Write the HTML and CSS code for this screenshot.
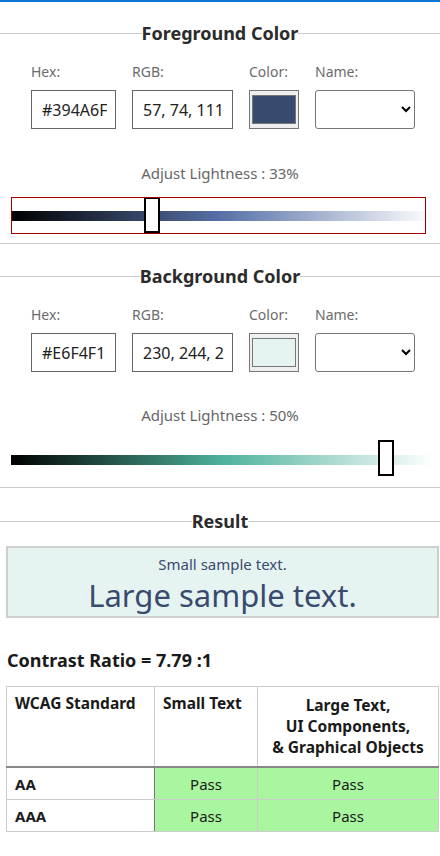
FILE: index.html
```html
<!DOCTYPE html>
<html lang="en">
<head>
<meta charset="utf-8">
<title>Color Contrast Checker</title>
<link rel="stylesheet" href="styles.css">
</head>
<body>
<div class="topbar"></div>

<section class="panel panel-fg">
  <h2 class="legend">Foreground Color</h2>
  <div class="fields">
    <label class="field field-hex"><span class="lbl">Hex:</span><input class="txt" type="text" value="#394A6F"></label>
    <label class="field field-rgb"><span class="lbl">RGB:</span><input class="txt" type="text" value="57, 74, 111"></label>
    <div class="field field-color"><span class="lbl">Color:</span><div class="swatch-box"><div class="swatch swatch-fg"></div></div></div>
    <label class="field field-name"><span class="lbl">Name:</span><select class="sel"><option></option></select></label>
  </div>
  <p class="adjust">Adjust Lightness : 33%</p>
  <div class="slider">
    <div class="track track-fg"></div>
    <div class="thumb" style="left:133px"></div>
    <div class="ring"></div>
  </div>
</section>

<section class="panel panel-bg">
  <h2 class="legend">Background Color</h2>
  <div class="fields">
    <label class="field field-hex"><span class="lbl">Hex:</span><input class="txt" type="text" value="#E6F4F1"></label>
    <label class="field field-rgb"><span class="lbl">RGB:</span><input class="txt" type="text" value="230, 244, 241"></label>
    <div class="field field-color"><span class="lbl">Color:</span><div class="swatch-box"><div class="swatch swatch-bg"></div></div></div>
    <label class="field field-name"><span class="lbl">Name:</span><select class="sel"><option></option></select></label>
  </div>
  <p class="adjust adjust-bg">Adjust Lightness : 50%</p>
  <div class="slider slider-bg">
    <div class="track track-bg"></div>
    <div class="thumb" style="left:367px"></div>
  </div>
</section>

<section class="result">
  <h2 class="legend">Result</h2>
  <div class="sample">
    <p class="sample-small">Small sample text.</p>
    <p class="sample-large">Large sample text.</p>
  </div>
  <h3 class="ratio">Contrast Ratio = 7.79 :1</h3>
  <table class="wcag">
    <thead>
      <tr>
        <th class="c1">WCAG Standard</th>
        <th class="c2">Small Text</th>
        <th class="c3">Large Text,<br>UI Components,<br>&amp; Graphical Objects</th>
      </tr>
    </thead>
    <tbody>
      <tr><th class="lvl">AA</th><td class="pass">Pass</td><td class="pass">Pass</td></tr>
      <tr><th class="lvl">AAA</th><td class="pass">Pass</td><td class="pass">Pass</td></tr>
    </tbody>
  </table>
</section>
</body>
</html>
```

FILE: styles.css
```css
* { box-sizing: border-box; }
html, body { margin: 0; padding: 0; background: #fff; }
body {
  font-family: "Noto Sans", "Open Sans", "Liberation Sans", sans-serif;
  color: #2b2b2b;
  width: 440px;
}
.topbar { height: 2px; background: #0a78d0; }

.panel { border-bottom: 1px solid #cccccc; }
.panel-fg { margin-top: 19px; padding-bottom: 10px; }
.panel-bg { margin-top: 20px; padding-bottom: 11px; }

.legend {
  display: flex;
  align-items: center;
  margin: 0;
  font-size: 18px;
  line-height: 24px;
  font-weight: 700;
  color: #2b2b2b;
  white-space: nowrap;
}
.legend::before, .legend::after {
  content: "";
  flex: 1;
  border-top: 1px solid #cccccc;
}

.fields {
  display: flex;
  gap: 16px;
  padding-left: 31px;
  margin-top: 17px;
}
.field { display: flex; flex-direction: column; }
.lbl {
  font-size: 14px;
  line-height: 20px;
  color: #6b6b6b;
  margin-bottom: 8px;
}
.field-hex { width: 85px; }
.field-rgb { width: 101px; }
.field-color { width: 50px; }
.field-name { width: 100px; }

.txt {
  width: 100%;
  height: 39px;
  margin: 0;
  border: 1px solid #666;
  border-radius: 0;
  padding: 0 8px 0 10px;
  font-family: inherit;
  font-size: 16px;
  color: #222;
  background: #fff;
}
.swatch-box {
  width: 50px;
  height: 39px;
  border: 1px solid #767676;
  background: #efefef;
  padding: 4px 2px;
}
.swatch { height: 100%; border: 1px solid #777; }
.swatch-fg { background: #394a6f; }
.swatch-bg { background: #e6f4f1; }
.sel {
  width: 100%;
  height: 39px;
  margin: 0;
  border: 1px solid #767676;
  border-radius: 3px;
  background: #fff;
  font-family: inherit;
  font-size: 16px;
}

.adjust {
  margin: 34px 0 0;
  text-align: center;
  font-size: 15px;
  line-height: 20px;
  color: #666;
}
.adjust-bg { margin-top: 33px; }

.slider {
  position: relative;
  margin: 14px 0 0 11px;
  width: 422px;
  height: 36px;
  padding-top: 14px;
}
.slider-bg { margin-top: 15px; padding-top: 15px; }
.track { height: 10px; }
.track-fg {
  background: linear-gradient(to right, hsl(221, 32%, 0%), hsl(221, 32%, 50%), hsl(221, 32%, 100%));
}
.track-bg {
  background: linear-gradient(to right, hsl(167, 39%, 0%), hsl(167, 39%, 50%), hsl(167, 39%, 100%));
}
.thumb {
  position: absolute;
  top: 0;
  width: 16px;
  height: 36px;
  background: #fff;
  border: 2px solid #000;
}
.ring {
  position: absolute;
  top: 0;
  left: 0;
  width: 415px;
  height: 37px;
  border: 1px solid #a30000;
}

.result { margin-top: 21px; }
.sample {
  margin: 13px 1px 0 6px;
  border: 2px solid #cfcfcf;
  background: #e6f4f1;
  color: #394a6f;
  text-align: center;
  padding-top: 6px;
}
.sample p { margin: 0; }
.sample-small { font-size: 15px; line-height: 20px; }
.sample-large { font-size: 31px; line-height: 42px; }

.ratio {
  margin: 30px 0 0 7px;
  font-size: 18px;
  line-height: 24px;
  font-weight: 700;
  color: #1a1a1a;
}

.wcag {
  margin: 14px 0 0 6px;
  width: 433px;
  border-collapse: collapse;
  font-size: 15px;
  line-height: 20px;
  color: #1a1a1a;
}
.wcag th, .wcag td { border: 1px solid #cccccc; }
.wcag thead th {
  vertical-align: top;
  font-size: 15.5px;
  font-weight: 700;
  text-align: left;
  padding: 6px 8px;
  border-bottom: 2px solid #888;
}
.wcag .c1 { width: 148px; }
.wcag .c2 { width: 103px; }
.wcag thead .c3 {
  text-align: center;
  line-height: 21px;
  padding: 8px 4px 8px;
}
.wcag .lvl {
  text-align: left;
  font-weight: 700;
  padding: 6px 8px 5px;
  border-right: 1px solid #777;
}
.wcag .pass {
  background: #aaf6a0;
  text-align: center;
  padding: 6px 8px 5px;
}
```
